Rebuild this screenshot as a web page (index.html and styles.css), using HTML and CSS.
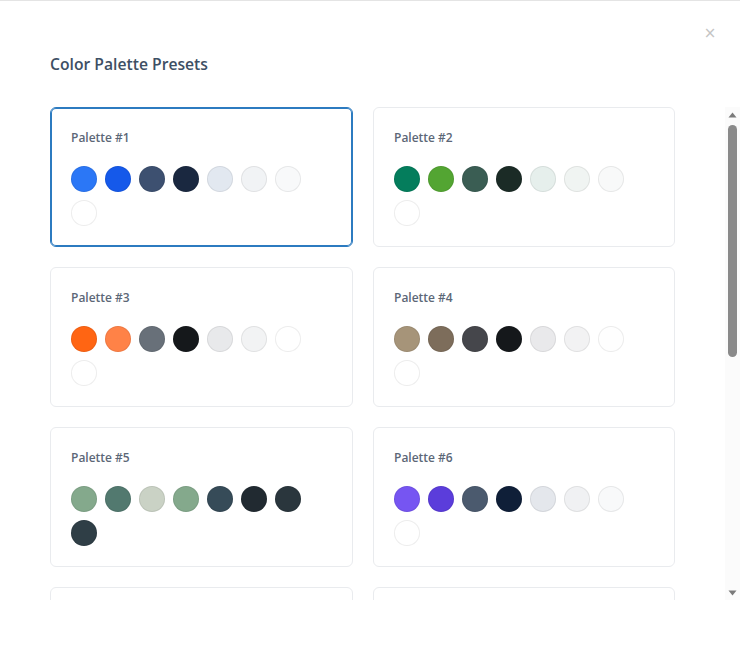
FILE: index.html
```html
<!DOCTYPE html>
<html>
<head>
<meta charset="utf-8">
<link rel="stylesheet" href="styles.css">
</head>
<body>
<div class="modal">
  <button class="close" aria-label="Close">×</button>
  <h2 class="title">Color Palette Presets</h2>
  <div class="body-row">
    <div class="scroller">
      <div class="grid">
        <div class="card selected">
          <div class="name">Palette #1</div>
          <div class="swatches">
            <span class="sw" style="background:#2b77f6"></span><span class="sw" style="background:#1559ea"></span><span class="sw" style="background:#3d5070"></span><span class="sw" style="background:#1a2840"></span><span class="sw" style="background:#e2e8f0"></span><span class="sw" style="background:#f1f3f5"></span><span class="sw" style="background:#f8f9fa"></span><span class="sw" style="background:#ffffff"></span>
          </div>
        </div>
        <div class="card">
          <div class="name">Palette #2</div>
          <div class="swatches">
            <span class="sw" style="background:#047d5c"></span><span class="sw" style="background:#53a532"></span><span class="sw" style="background:#3a5d53"></span><span class="sw" style="background:#1b2b26"></span><span class="sw" style="background:#e6efec"></span><span class="sw" style="background:#f0f4f2"></span><span class="sw" style="background:#f8f9f9"></span><span class="sw" style="background:#ffffff"></span>
          </div>
        </div>
        <div class="card">
          <div class="name">Palette #3</div>
          <div class="swatches">
            <span class="sw" style="background:#ff6513"></span><span class="sw" style="background:#ff8247"></span><span class="sw" style="background:#687079"></span><span class="sw" style="background:#15181b"></span><span class="sw" style="background:#e8e9eb"></span><span class="sw" style="background:#f2f3f4"></span><span class="sw" style="background:#ffffff"></span><span class="sw" style="background:#ffffff"></span>
          </div>
        </div>
        <div class="card">
          <div class="name">Palette #4</div>
          <div class="swatches">
            <span class="sw" style="background:#a69479"></span><span class="sw" style="background:#7d6d5b"></span><span class="sw" style="background:#45464b"></span><span class="sw" style="background:#15181b"></span><span class="sw" style="background:#e9e9eb"></span><span class="sw" style="background:#f2f2f3"></span><span class="sw" style="background:#fefefe"></span><span class="sw" style="background:#ffffff"></span>
          </div>
        </div>
        <div class="card">
          <div class="name">Palette #5</div>
          <div class="swatches">
            <span class="sw" style="background:#84a98c"></span><span class="sw" style="background:#52796f"></span><span class="sw" style="background:#cad2c5"></span><span class="sw" style="background:#84a98c"></span><span class="sw" style="background:#364b58"></span><span class="sw" style="background:#212a31"></span><span class="sw" style="background:#2a363d"></span><span class="sw" style="background:#2f3e46"></span>
          </div>
        </div>
        <div class="card">
          <div class="name">Palette #6</div>
          <div class="swatches">
            <span class="sw" style="background:#7655f2"></span><span class="sw" style="background:#5b3ddb"></span><span class="sw" style="background:#4b5a6e"></span><span class="sw" style="background:#0f1f38"></span><span class="sw" style="background:#e4e7ec"></span><span class="sw" style="background:#f0f1f3"></span><span class="sw" style="background:#f8f9fa"></span><span class="sw" style="background:#ffffff"></span>
          </div>
        </div>
        <div class="card">
          <div class="name">Palette #7</div>
          <div class="swatches">
            <span class="sw" style="background:#e11d48"></span><span class="sw" style="background:#f43f5e"></span><span class="sw" style="background:#64748b"></span><span class="sw" style="background:#1e1b24"></span><span class="sw" style="background:#e8e9eb"></span><span class="sw" style="background:#f2f3f4"></span><span class="sw" style="background:#f9fafb"></span><span class="sw" style="background:#ffffff"></span>
          </div>
        </div>
        <div class="card">
          <div class="name">Palette #8</div>
          <div class="swatches">
            <span class="sw" style="background:#0891b2"></span><span class="sw" style="background:#06b6d4"></span><span class="sw" style="background:#475569"></span><span class="sw" style="background:#0f172a"></span><span class="sw" style="background:#e2e8f0"></span><span class="sw" style="background:#f1f5f9"></span><span class="sw" style="background:#f8fafc"></span><span class="sw" style="background:#ffffff"></span>
          </div>
        </div>
        <div class="card">
          <div class="name">Palette #9</div>
          <div class="swatches">
            <span class="sw" style="background:#d97706"></span><span class="sw" style="background:#f59e0b"></span><span class="sw" style="background:#57534e"></span><span class="sw" style="background:#1c1917"></span><span class="sw" style="background:#e7e5e4"></span><span class="sw" style="background:#f5f5f4"></span><span class="sw" style="background:#fafaf9"></span><span class="sw" style="background:#ffffff"></span>
          </div>
        </div>
        <div class="card">
          <div class="name">Palette #10</div>
          <div class="swatches">
            <span class="sw" style="background:#db2777"></span><span class="sw" style="background:#ec4899"></span><span class="sw" style="background:#52525b"></span><span class="sw" style="background:#18181b"></span><span class="sw" style="background:#e4e4e7"></span><span class="sw" style="background:#f4f4f5"></span><span class="sw" style="background:#fafafa"></span><span class="sw" style="background:#ffffff"></span>
          </div>
        </div>
        <div class="card">
          <div class="name">Palette #11</div>
          <div class="swatches">
            <span class="sw" style="background:#4f46e5"></span><span class="sw" style="background:#6366f1"></span><span class="sw" style="background:#4b5563"></span><span class="sw" style="background:#111827"></span><span class="sw" style="background:#e5e7eb"></span><span class="sw" style="background:#f3f4f6"></span><span class="sw" style="background:#f9fafb"></span><span class="sw" style="background:#ffffff"></span>
          </div>
        </div>
        <div class="card">
          <div class="name">Palette #12</div>
          <div class="swatches">
            <span class="sw" style="background:#16a34a"></span><span class="sw" style="background:#22c55e"></span><span class="sw" style="background:#525252"></span><span class="sw" style="background:#171717"></span><span class="sw" style="background:#e5e5e5"></span><span class="sw" style="background:#f5f5f5"></span><span class="sw" style="background:#fafafa"></span><span class="sw" style="background:#ffffff"></span>
          </div>
        </div>
      </div>
    </div>
    <div class="scrollbar" aria-hidden="true">
      <div class="sb-btn">
        <svg width="9" height="6" viewBox="0 0 9 6"><path d="M4.5 0.5 L8.5 5.5 L0.5 5.5 Z" fill="#7a7a7a"/></svg>
      </div>
      <div class="sb-track">
        <div class="sb-thumb"></div>
      </div>
      <div class="sb-btn">
        <svg width="9" height="6" viewBox="0 0 9 6"><path d="M0.5 0.5 L8.5 0.5 L4.5 5.5 Z" fill="#7a7a7a"/></svg>
      </div>
    </div>
  </div>
</div>
</body>
</html>
```
FILE: styles.css
```css
html, body {
  margin: 0;
  padding: 0;
  background: #ffffff;
}
body {
  font-family: "Open Sans", "Noto Sans", "Liberation Sans", sans-serif;
  border-top: 1px solid #e4e4e4;
  height: 650px;
  overflow: hidden;
}
.modal {
  position: relative;
  padding: 52px 0 0 50px;
}
.close {
  position: absolute;
  top: 21px;
  right: 21px;
  width: 18px;
  height: 22px;
  padding: 0;
  border: 0;
  background: transparent;
  color: #c4c4c4;
  font-family: "DejaVu Sans", sans-serif;
  font-size: 15px;
  line-height: 22px;
  cursor: pointer;
}
.title {
  margin: 0 0 32px 0;
  font-size: 15.7px;
  line-height: 22px;
  font-weight: 600;
  color: #3d4f64;
}
.body-row {
  display: flex;
  align-items: stretch;
  height: 493px;
}
.scroller {
  width: 625px;
  height: 493px;
  overflow-y: scroll;
  scrollbar-width: none;
}
.scroller::-webkit-scrollbar {
  display: none;
}
.grid {
  width: 625px;
  display: grid;
  grid-template-columns: 303px 302px;
  gap: 20px;
  padding-bottom: 46px;
}
.card {
  box-sizing: border-box;
  height: 140px;
  border: 1px solid #e9ebee;
  border-radius: 6px;
  padding: 21px 20px 20px;
  background: #fff;
}
.card.selected {
  border-color: #2c7bc0;
  box-shadow: inset 0 0 0 1px #2c7bc0;
}
.name {
  font-size: 12px;
  line-height: 18px;
  font-weight: 600;
  color: #5c6777;
  margin-bottom: 19px;
}
.swatches {
  display: flex;
  flex-wrap: wrap;
  gap: 8px;
}
.sw {
  box-sizing: border-box;
  width: 26px;
  height: 26px;
  border-radius: 50%;
  border: 1px solid rgba(0, 0, 0, 0.07);
}
.scrollbar {
  margin-left: 50px;
  width: 15px;
  display: flex;
  flex-direction: column;
  background: #fbfbfb;
}
.sb-btn {
  height: 15px;
  display: flex;
  align-items: center;
  justify-content: center;
}
.sb-track {
  flex: 1;
  padding: 3px 3px 0;
}
.sb-thumb {
  height: 232px;
  border-radius: 5px;
  background: #8a8a8a;
}
```
